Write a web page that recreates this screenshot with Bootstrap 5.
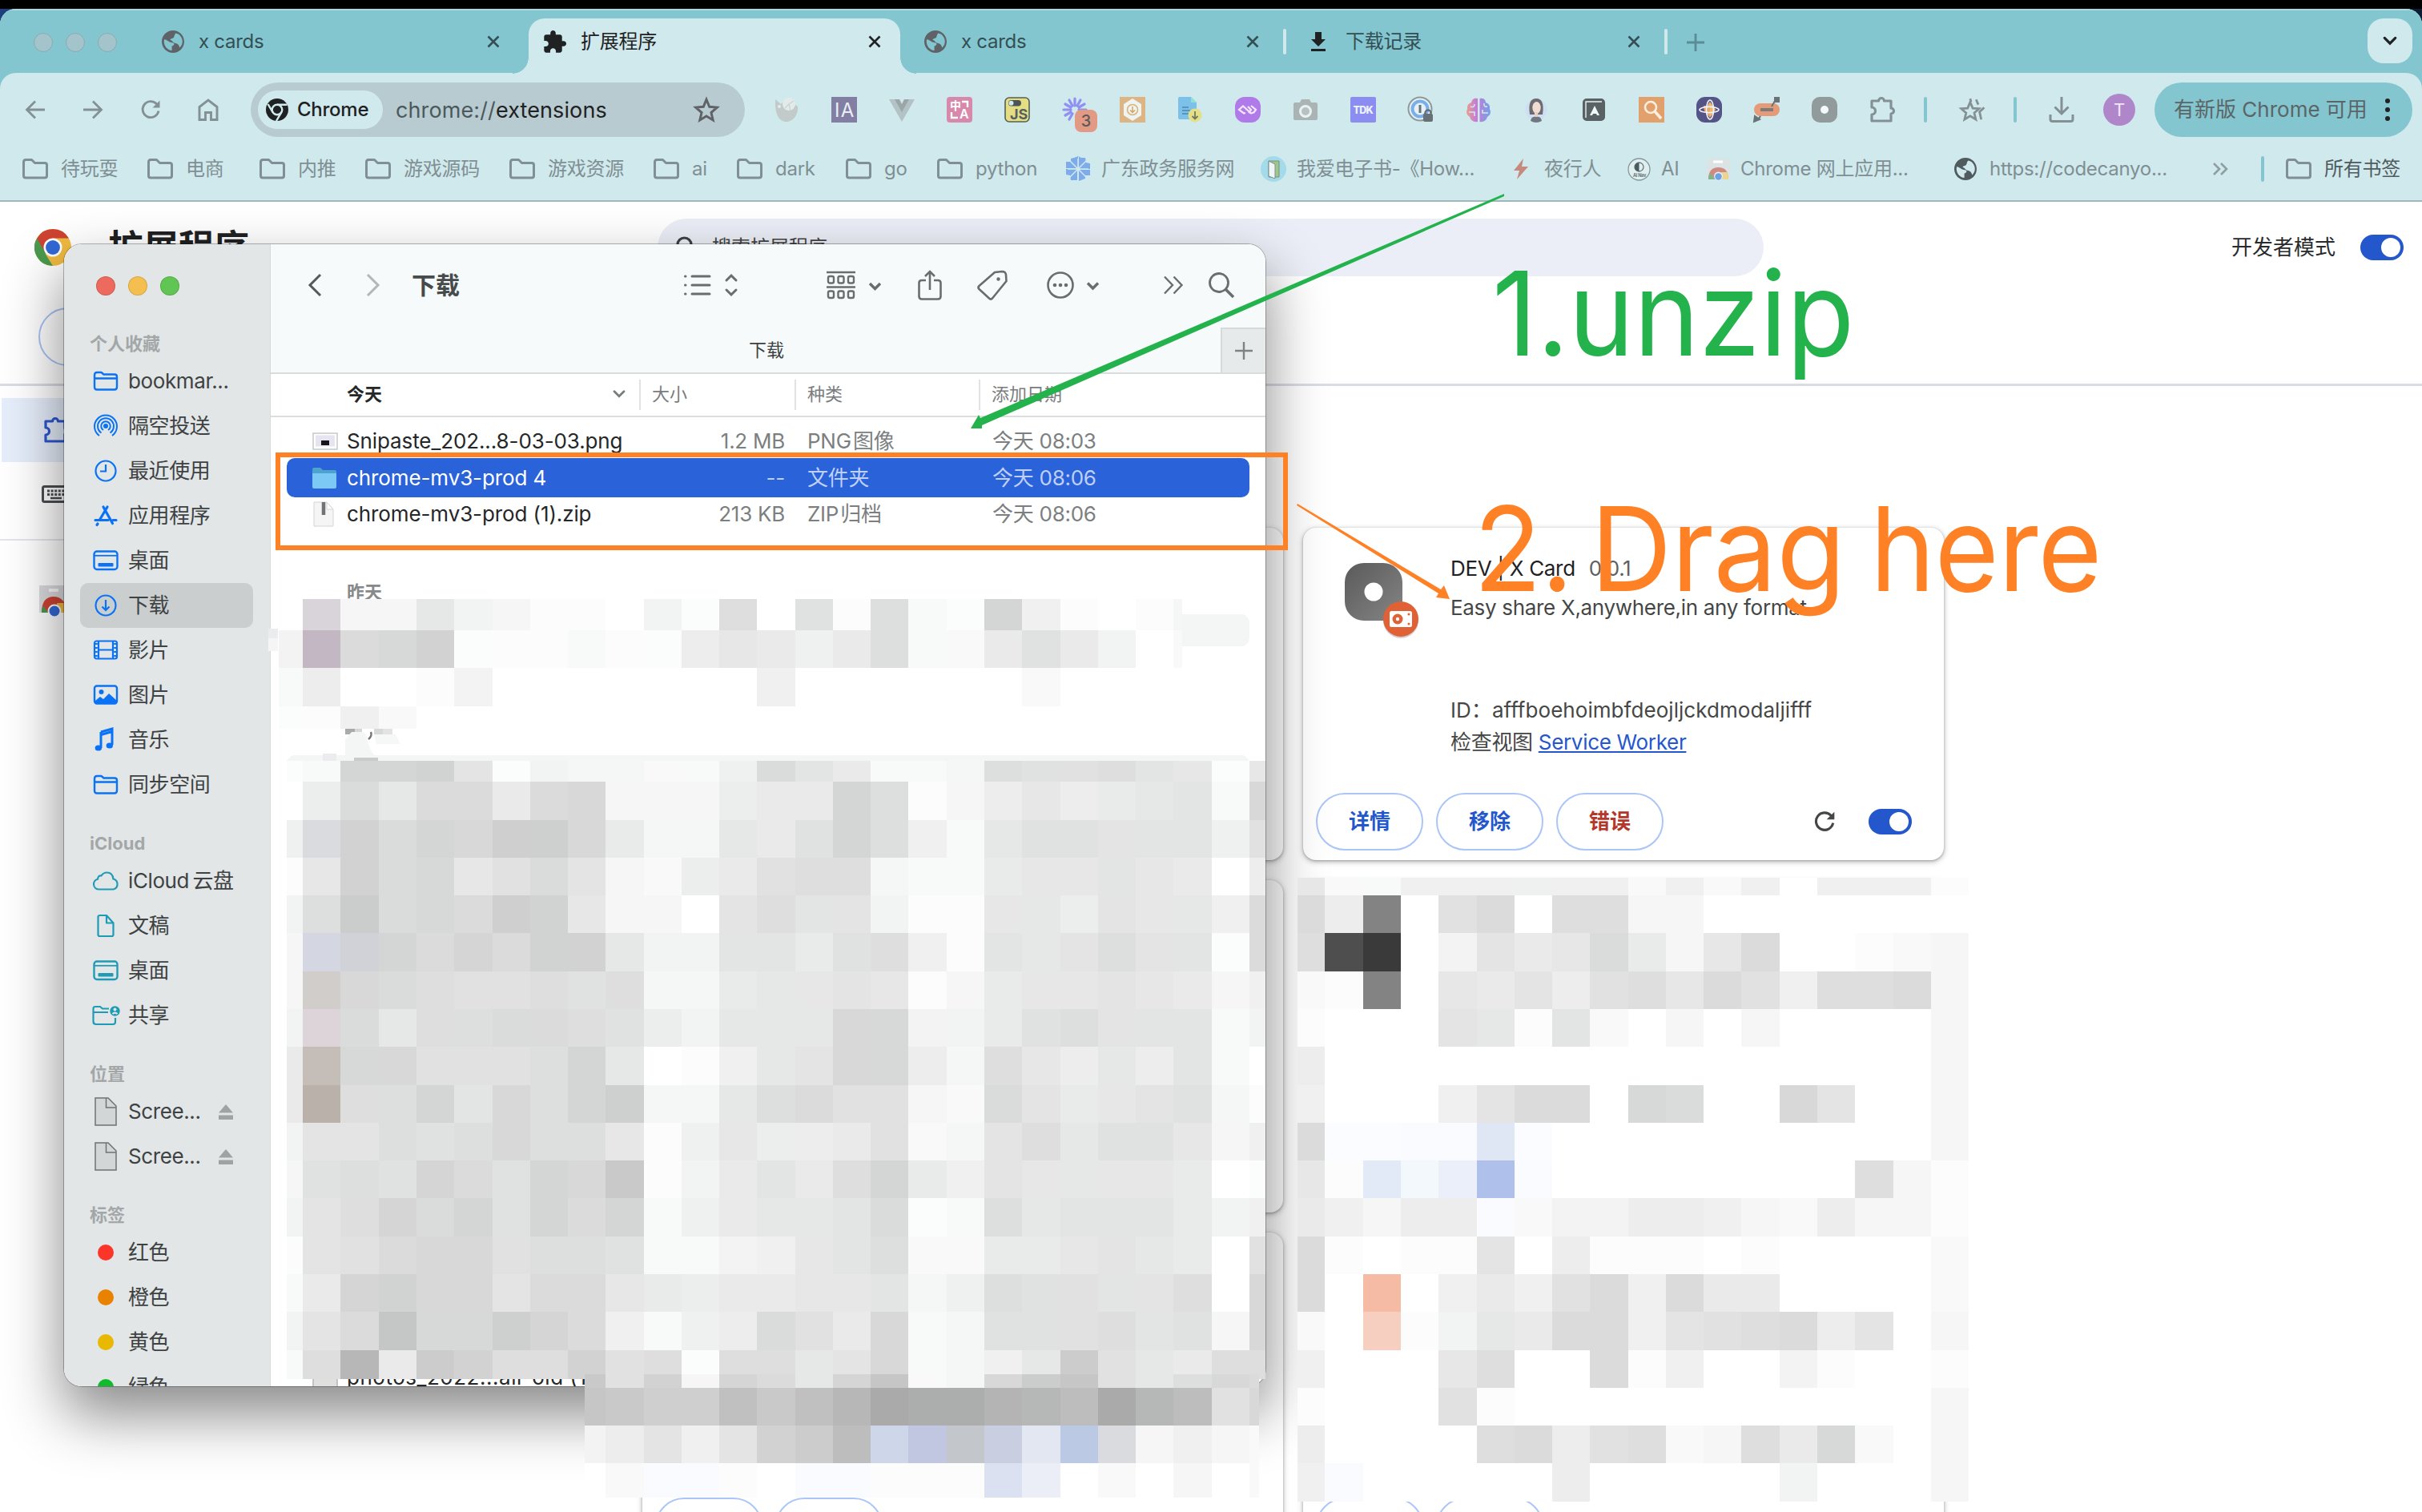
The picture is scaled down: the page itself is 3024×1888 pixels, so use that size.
<!DOCTYPE html>
<html lang="zh-CN">
<head>
<meta charset="utf-8">
<title>扩展程序</title>
<link href="https://cdn.jsdelivr.net/npm/bootstrap@5.3.0/dist/css/bootstrap.min.css" rel="stylesheet">
<script src="https://cdn.jsdelivr.net/npm/bootstrap@5.3.0/dist/js/bootstrap.bundle.min.js"></script>
<style>
html,body{width:3024px;height:1888px;overflow:hidden}
body{background:#000;font-family:Inter,"Noto Sans CJK SC",sans-serif;font-size:26px;line-height:1;color:#1f2123;padding-top:11px;letter-spacing:-.01em}
svg{display:block;flex:none;overflow:visible}
.defs{position:absolute}
.desk{background:linear-gradient(90deg,#1d3f7c,#0b1c33);height:1877px}
.browser{height:1877px;background:#fff;border-radius:20px 20px 0 0;overflow:hidden}
.tabstrip{height:80px;background:#83c6cf;border-top:2px solid #a5dbe2;display:grid;grid-template-columns:188px 472px 464px 482px 476px 874px 68px;font-size:24px;color:#344f54}
.lights{padding-left:42px}
.lights i{width:24px;height:24px;border-radius:50%;background:#a3c4ca;border:1px solid #8aabb0}
.tabx{padding:0 36px 2px 14px}
.tabx .nm{margin-left:18px}
.tab-on{background:#d0e9ec;border-radius:20px 20px 0 0;margin-top:10px;height:69px;padding:0 24px 11px 14px;color:#1f2123;position:relative}
.tab-on:before,.tab-on:after{content:"";position:absolute;bottom:0;width:20px;height:20px}
.tab-on:before{left:-20px;background:radial-gradient(circle at 0 0,#83c6cf 19.5px,#d0e9ec 20px)}
.tab-on:after{right:-20px;background:radial-gradient(circle at 100% 0,#83c6cf 19.5px,#d0e9ec 20px)}
.tab-3{padding:0 0 2px 30px}
.grey{color:#5f6368}
.cx{margin-right:30px}
.vsep{width:4px;height:32px;border-radius:2px;background:#d0e9ec}
.tabmenu{width:56px;height:56px;border-radius:20px;background:#d0e9ec;margin-top:10px;color:#1f2123}
.chrome-ui{background:#83c6cf}
.chrome-bars{background:#d0e9ec;border-radius:20px 20px 0 0;height:161px;border-bottom:2px solid #a2b7ba}
.toolbar{height:92px;display:grid;grid-template-columns:8px 72px 72px 72px 72px 17px 617px 16px repeat(20,72px) 36px 80px 28px 88px 56px 16px 322px;color:#839194}
.toolbar>*{align-self:center;justify-self:center}
.omni{width:617px;height:68px;border-radius:34px;background:#b8cbd0;padding-left:9px;padding-right:31px}
.chip{height:48px;border-radius:24px;background:#d0e9ec;padding:0 18px 0 10px;font-size:24px;font-weight:500;color:#1f2123;gap:11px;width:156px}
.url{margin-left:16px;color:#4c595c;font-size:27px;letter-spacing:.004em}
.url b{font-weight:400;color:#1f2123}
.vs2{width:4px;height:32px;border-radius:2px;background:#83c6cf}
.ava{width:40px;height:40px;border-radius:50%;background:#b086ca;color:#f1e6f6;font-size:22px}
.update{width:322px;height:68px;border-radius:34px;background:#83c6cf;color:#5b6568;font-size:26px;padding:0 28px 0 24px;letter-spacing:0;white-space:nowrap}
.marks{height:56px;display:grid;grid-template-columns:156px 140px 132px 180px 180px 104px 136px 114px 160px 244px 304px 154px 99px 309px 322px 61px 31px 160px;padding-left:28px;font-size:24px;color:#7f8f93;align-items:center}
.mk{gap:16px;white-space:nowrap}
.mk.tight{gap:13px}
.allmk{color:#4f5b5e}
.page{position:relative;height:1636px}
.phead{height:230px;border-bottom:3px solid #dadce4;padding:21px 23px 0 43px;display:grid;grid-template-columns:778px 1381px 1fr;position:relative}
.ptitle{font-size:44px;font-weight:700;letter-spacing:0;height:72px;gap:46px}
.psearch{height:72px;border-radius:36px;background:#ebeef6;font-size:24px;color:#444;padding-left:23px;gap:19px;letter-spacing:0}
.pdev{height:72px;color:#2a2b2d;letter-spacing:0;gap:31px}
.switch{width:54px;height:32px;border-radius:16px;background:#2457cb;padding:4px}
.switch i{width:24px;height:24px;border-radius:50%;background:#fff}
.pload{width:300px;height:73px;border:2px solid #a9c3f5;border-radius:37px;margin:39px 0 0 5px}
.pbody{display:grid;grid-template-columns:802px 1fr}
.pnav{width:600px}
.pnav .on{background:#e6eefb;margin:15px 0 0 2px;height:80px;padding-left:51px;color:#2b58cf}
.pnav .kb{height:80px;padding-left:52px;color:#4b4e51}
.pnav .ws{border-top:2px solid #e4e5ea;margin-top:16px;padding:56px 0 0 49px}
.cards{display:grid;grid-template-columns:800px 800px;grid-auto-rows:415px;gap:25px 25px;padding-top:177px}
.xc{background:#fff;border-radius:16px;box-shadow:0 2px 6px 1px rgba(60,64,67,.28),0 1px 3px rgba(60,64,67,.35);padding:16px 16px 12px;display:flex;flex-direction:column}
.xinfo{flex:1;padding:28px 0 0 36px;gap:60px;color:#454746}
.xicon{width:72px;height:72px}
.xt{width:600px;white-space:nowrap;letter-spacing:-.012em}
.xt div{height:26px}
.xname{margin-top:-6px;color:#1f2123}
.xver{margin-left:10px;color:#5d6062}
.xdesc{margin-top:23px}
.idl{margin-top:102px;letter-spacing:.002em}
.svl{margin-top:14px}
.swk{color:#2457cb}
.pb{width:134px;height:72px;border:2px solid #aac5f6;border-radius:36px;color:#2457cb;font-weight:700;letter-spacing:0;background:transparent;font-size:26px;padding:0;line-height:1}
.pb.red{color:#b3372b}
/* Finder window */
.finder{position:absolute;left:80px;top:305px;width:1500px;height:1426px;border-radius:22px;overflow:hidden;background:#fff;display:grid;grid-template-columns:258px 1fr;color:#252728}
.fshadow{position:absolute;left:80px;top:305px;width:1500px;height:1426px;border-radius:22px;box-shadow:0 0 0 1px rgba(0,0,0,.28),0 34px 72px 2px rgba(0,0,0,.46)}
.fside{background:#e2e6e7;border-right:1px solid #d5d9da;height:1426px;overflow:hidden;color:#3e4243}
.flights{padding:40px 0 41px 40px;gap:16px}
.flights i{width:24px;height:24px;border-radius:50%;box-shadow:inset 0 0 0 1px rgba(0,0,0,.13)}
.l-red{background:#ed6a5e}.l-yel{background:#f5bf4f}.l-grn{background:#61c554}
.t-red{background:#fc352b}.t-org{background:#e88200}.t-yel{background:#e9b800}.t-grn{background:#10bb2c}
.fh{height:38px;padding-left:32px;font-size:22px;font-weight:700;color:#a3a7a8;letter-spacing:0}
.fh.nx{margin-top:26px}
.fi{height:56px;margin:0 21px 0 20px;border-radius:10px;padding-left:14px;gap:10px;white-space:nowrap;letter-spacing:-.015em}
.fi svg{color:#0a73f5}
.fi.cl svg{color:#1f9bb6}
.fi.sel{background:#cacecf}
.dot{width:20px;height:20px;border-radius:50%;margin:0 8px}
.ftop{background:#f6fafa;height:162px;border-bottom:2px solid #d9dcdc;display:grid;grid-template-rows:104px 56px}
.fbar{color:#686d6e;padding:0 36px 2px 46px;display:grid;grid-template-columns:71px 59px 340px 178px 114px 74px 87px 145px 57px 34px;align-items:center}
.fbar b{font-size:30px;color:#474b4c;letter-spacing:0}
.ftabs{display:grid;grid-template-columns:1186px 56px;font-size:22px;color:#3e4243;letter-spacing:0}
.tname{padding-left:52px}
.fplus{background:#e6eaeb;border:2px solid #d5d9d9;border-width:2px 0 0 2px;color:#7d8283}
.fcols{height:54px;border-bottom:2px solid #dcdddd;display:grid;grid-template-columns:462px 194px 230px 1fr;align-items:center;font-size:22px;color:#7a7d7e;letter-spacing:0}
.fcols>div{height:38px;border-right:2px solid #e1e2e2;padding-left:14px;padding-bottom:3px}
.fcols>.c1{padding-left:95px;color:#252728}
.c1 svg{color:#7a7d7e;margin-right:17px}
.fcols>div:last-child{border:0}
.flist{padding-top:9px}
.fr{margin:0 20px;height:42px;border-radius:10px;display:grid;grid-template-columns:75px 387px 160px 28px 231px 1fr;align-items:center;white-space:nowrap;color:#7c7f80}
.fr>:first-child{margin-left:32px}
.fr .nm{color:#252728;letter-spacing:-.004em}
.fr.sel{background:#2a62da;height:49px;color:#bfd0f6}
.fr.sel .nm{color:#fff}
.fday{margin:65px 0 0 95px;font-size:22px;font-weight:700;color:#87898a;height:22px;letter-spacing:0}
.fr.last{margin-top:949px}
.fr.last .nm{letter-spacing:.02em}
.over{position:absolute;left:0;top:0;width:3024px;height:1888px;pointer-events:none}
</style>
</head>
<body>
<svg width="0" height="0" class="defs">
<defs>
<symbol id="globe" viewBox="2 2 20 20"><path fill="currentColor" d="M12 2C6.480 2 2 6.480 2 12s4.480 10 10 10 10-4.480 10-10S17.520 2 12 2zm-1 17.930c-3.950-.49-7-3.850-7-7.930 0-.62.08-1.210.21-1.790C6 9.500 8 13 12 13c1.500.500 1.500 2-1 3v3.930zm6.900-2.540c-.5-2.500-1.500-3.400-3.400-3.890-3-.5-2.500-2.500-5-3 .5-1.500 2-1 3-2 1-1 .5-3 2-4 3.500.500 5.900 4.060 5.900 7.410 0 2.080-.8 3.970-2.500 5.480z"/></symbol>
<symbol id="close" viewBox="0 0 16 16"><path d="M1.500 1.500l13 13M14.500 1.500l-13 13" stroke="currentColor" stroke-width="2.600" fill="none"/></symbol>
<symbol id="puz" viewBox="1 1 22 22"><path fill="currentColor" d="M20.500 11H19V7c0-1.100-.9-2-2-2h-4V3.500C13 2.120 11.880 1 10.500 1S8 2.120 8 3.500V5H4c-1.100 0-1.990.9-1.990 2v3.800H3.500c1.490 0 2.700 1.210 2.700 2.700s-1.210 2.700-2.700 2.700H2V20c0 1.100.9 2 2 2h3.800v-1.500c0-1.490 1.210-2.700 2.700-2.700 1.490 0 2.700 1.210 2.700 2.700V22H17c1.100 0 2-.9 2-2v-4h1.500c1.380 0 2.500-1.120 2.500-2.500S21.880 11 20.500 11z"/></symbol>
<symbol id="puzo" viewBox="0 0 34 34"><path fill="none" stroke="currentColor" stroke-width="3.200" stroke-linejoin="round" d="M4 6h8.500a3.500 3.500 0 0 1 7 0H28v9a3.500 3.500 0 0 1 0 7v9H4v-8a4.500 4.500 0 0 0 0-9z"/></symbol>
<symbol id="fold" viewBox="0 0 32 26"><path fill="none" stroke="currentColor" stroke-width="3" stroke-linejoin="round" d="M1.500 4.500Q1.500 1.500 4 1.500h7.500l4 4H28q2.500 0 2.500 2.500v13.500q0 2.500-2.500 2.500H4q-2.500 0-2.500-2.500z"/></symbol>
<symbol id="ffold" viewBox="0 0 32 26"><path fill="none" stroke="currentColor" stroke-width="2.400" stroke-linejoin="round" d="M2 5.500Q2 2 5 2h5.500l3 2.500H27q3 0 3 3V20q0 3.500-3 3.500H5Q2 23.500 2 20zM2 9.500h28"/></symbol>
<symbol id="desk" viewBox="0 0 32 26"><rect x="1.500" y="1.500" width="29" height="22.500" rx="3.500" fill="none" stroke="currentColor" stroke-width="2.400"/><path d="M2 6.800h28" stroke="currentColor" stroke-width="1.800"/><rect x="6.500" y="16" width="19" height="4.500" rx="1" fill="currentColor"/></symbol>
<symbol id="star" viewBox="0 0 32 32"><path fill="none" stroke="currentColor" stroke-width="2.800" d="M16 4l3.500 8.500 9 .8-6.900 6 2.100 8.900L16 23.500l-7.700 4.700 2.100-8.900-6.900-6 9-.8z"/></symbol>
<symbol id="chev" viewBox="0 0 16 10"><path d="M2 1.800l6 6 6-6" fill="none" stroke="currentColor" stroke-width="2.800" stroke-linecap="round"/></symbol>
<symbol id="reload" viewBox="0 0 28 28"><path d="M24 15.500A10 10 0 1 1 21.500 6.800L24 9" fill="none" stroke="currentColor" stroke-width="2.900"/><path d="M25.500 2.500v9h-9z" fill="currentColor"/></symbol>
<symbol id="clogo" viewBox="0 0 48 48"><circle cx="24" cy="24" r="24" fill="#f2bb41"/><path d="M3.200 12L24 24l-10 8 10 16A24 24 0 0 1 3.200 12z" fill="#4a9a4e"/><path d="M3.200 12A24 24 0 0 1 24 0a24 24 0 0 1 20.800 12H24L13 29z" fill="#cf4332"/><circle cx="24" cy="24" r="12" fill="#fff"/><circle cx="24" cy="24" r="9.300" fill="#3369d6"/></symbol>
<symbol id="doc" viewBox="0 0 28 36"><path d="M1 1h16l10 10v24H1z" fill="#d2d6d6" stroke="#6f7374" stroke-width="1.500"/><path d="M14.500 1v12H27" fill="none" stroke="#6f7374" stroke-width="1.500"/></symbol>
<symbol id="eject" viewBox="0 0 20 20"><path d="M10 1l9 10.500H1zM1 14.500h18V20H1z" fill="#9fa3a4"/></symbol>
</defs>
</svg>

<div class="desk"><div class="browser">
<div class="chrome-ui">
  <div class="tabstrip">
    <div class="lights d-flex align-items-center gap-3"><i></i><i></i><i></i></div>
    <div class="tabx d-flex align-items-center"><svg width="28" height="28" class="grey"><use href="#globe"/></svg><span class="nm">x cards</span><svg class="ms-auto" width="16" height="16"><use href="#close"/></svg></div>
    <div class="tabx tab-on d-flex align-items-center"><svg width="29" height="29" class="ms-1"><use href="#puz"/></svg><span class="nm">扩展程序</span><svg class="ms-auto" width="16" height="16"><use href="#close"/></svg></div>
    <div class="tabx tab-3 d-flex align-items-center"><svg width="28" height="28" class="grey"><use href="#globe"/></svg><span class="nm">x cards</span><svg class="ms-auto cx" width="16" height="16"><use href="#close"/></svg><div class="vsep"></div></div>
    <div class="tabx tab-3 d-flex align-items-center"><svg width="20" height="26" viewBox="0 0 20 26"><path d="M6 1h8v9h5l-9 9-9-9h5zM1 22h18v3H1z" fill="#1f2123"/></svg><span class="nm ms-4">下载记录</span><svg class="ms-auto cx" width="16" height="16"><use href="#close"/></svg><div class="vsep"></div></div>
    <div class="d-flex align-items-center ps-4"><svg width="22" height="22" viewBox="0 0 22 22"><path d="M11 0v22M0 11h22" stroke="#5a8c94" stroke-width="2.800"/></svg></div>
    <div class="tabmenu d-flex align-items-center justify-content-center"><svg width="18" height="12"><use href="#chev"/></svg></div>
  </div>
  <div class="chrome-bars">
    <div class="toolbar">
      <span></span>
      <svg width="26" height="24" viewBox="0 0 26 24"><path d="M25 12H3M13 1.500L2.500 12 13 22.500" fill="none" stroke="currentColor" stroke-width="2.800"/></svg>
      <svg width="26" height="24" viewBox="0 0 26 24"><path d="M1 12h22M13 1.500L23.500 12 13 22.500" fill="none" stroke="currentColor" stroke-width="2.800"/></svg>
      <svg width="28" height="28"><use href="#reload"/></svg>
      <svg width="26" height="28" viewBox="0 0 26 28"><path d="M2 26.500V10.500L13 2l11 8.500v16h-7.500v-9h-7v9z" fill="none" stroke="currentColor" stroke-width="2.900"/></svg>
      <span></span>
      <div class="omni d-flex align-items-center">
        <div class="chip d-flex align-items-center"><svg width="28" height="28" viewBox="0 0 28 28"><circle cx="14" cy="14" r="14" fill="#1f2123"/><circle cx="14" cy="14" r="6.300" fill="none" stroke="#d0e9ec" stroke-width="2.400"/><path d="M14 7.700h12.500M8.600 17.200L2.500 7M19.400 17.200L13 28" stroke="#d0e9ec" stroke-width="2.400"/></svg><span>Chrome</span></div>
        <div class="url">chrome://<b>extensions</b></div>
        <svg class="ms-auto grey" width="34" height="34"><use href="#star"/></svg>
      </div>
      <span></span>
      <svg width="32" height="32" viewBox="0 0 32 32"><path d="M2 3l7 6 7-7 14 10c1 9-5 19-14 19S1 22 2 3z" fill="#c3caca"/><circle cx="19" cy="9" r="8" fill="#e4eaea"/><path d="M19 9l-5 5M19 9l6-4M19 9l2 8" stroke="#c9d1d1" stroke-width="1.200"/><circle cx="7" cy="12" r="2" fill="#e4eaea"/></svg>
      <svg width="32" height="32" viewBox="0 0 32 32"><rect width="32" height="32" fill="#837ea4"/><text x="4" y="25" font-size="24" fill="#e8f0f6" textLength="24">IA</text></svg>
      <svg width="32" height="30" viewBox="0 0 32 30"><path d="M0 2h8l8 14 8-14h8L16 30z" fill="#b3c2c4"/><path d="M7 2h6l3 6 3-6h6l-9 16z" fill="#9aa6a8"/></svg>
      <svg width="32" height="32" viewBox="0 0 32 32"><rect width="32" height="32" rx="4" fill="#d889ab"/><text x="4" y="16" font-size="14" font-weight="700" fill="#fff">中</text><text x="16" y="27" font-size="16" font-weight="600" fill="#fff">A</text><path d="M19 6h7v7M6 19v7h8" stroke="#fff" stroke-width="2.400" fill="none"/></svg>
      <svg width="32" height="32" viewBox="0 0 32 32"><rect x="1" y="1" width="30" height="30" rx="5" fill="#e3de83" stroke="#555f55" stroke-width="1.600"/><rect x="5" y="4" width="16" height="7.500" rx="3.700" fill="#4c5557"/><circle cx="8.500" cy="7.700" r="3" fill="#d0e9ec"/><text x="7" y="28" font-size="18" font-weight="700" fill="#566062" textLength="22">JS</text></svg>
      <svg width="32" height="32" viewBox="0 0 32 32"><g stroke="#8e90f2" stroke-width="3.200" stroke-linecap="round"><path d="M16 2v9M9 4l4 7M23 4l-4 7M4 9l7 4M28 9l-7 4M2 16h9M4 23l7-4M9 28l4-7M21 16h9"/></g><rect x="16" y="16" width="28" height="28" rx="8" fill="#e29a85"/><text x="30" y="37" font-size="20" font-weight="500" text-anchor="middle" fill="#5f5a58">3</text></svg>
      <svg width="32" height="32" viewBox="0 0 32 32"><rect width="32" height="32" fill="#ddb585"/><path d="M16 2l11 7v14l-11 7-11-7V9z" fill="#eef4f1"/><circle cx="16" cy="16" r="6.500" fill="none" stroke="#d9b37b" stroke-width="1.600"/><path d="M16 12v7M13 16.500l3 3 3-3" stroke="#d9a35f" fill="none" stroke-width="1.500"/></svg>
      <svg width="32" height="32" viewBox="0 0 32 32"><path d="M3 0h14l7 7v21H3Q1 28 1 26V2Q1 0 3 0z" fill="#7cc1ea"/><path d="M17 0l7 7h-7z" fill="#8fe3d5"/><path d="M6 13h8M6 17h10M6 21h8" stroke="#4c87b0" stroke-width="1.600"/><circle cx="22" cy="23" r="8.500" fill="#e5e086"/><path d="M22 18v9M18.500 24l3.500 3.500 3.500-3.500" stroke="#6e7a66" stroke-width="1.800" fill="none"/></svg>
      <svg width="32" height="32" viewBox="0 0 32 32"><rect width="32" height="32" rx="12" fill="#b07ae8"/><path d="M13 20l-2 .5L5 16l5-4.500 10 9 3-1M16 12l4 4-3 4M20 11l6 5-3 4" fill="none" stroke="#f2e8fb" stroke-width="2.200"/></svg>
      <svg width="30" height="26" viewBox="0 0 30 26"><path d="M2 4h6l2-4h10l2 4h6q2 0 2 2v18q0 2-2 2H2q-2 0-2-2V6q0-2 2-2z" fill="#aab4b5"/><circle cx="15" cy="15" r="6.500" fill="#b9c0c1" stroke="#e8f2f3" stroke-width="3"/></svg>
      <svg width="32" height="32" viewBox="0 0 32 32"><rect width="32" height="32" rx="2" fill="#8b8df0"/><text x="3.500" y="20.500" font-size="12.500" font-weight="800" fill="#eef2fc" textLength="25">TDK</text></svg>
      <svg width="34" height="34" viewBox="0 0 34 34"><circle cx="16" cy="16" r="14.500" fill="#e7f1f4" stroke="#8d999b" stroke-width="2"/><circle cx="16" cy="16" r="9.500" fill="none" stroke="#7ab0ea" stroke-width="4"/><path d="M16 11v10" stroke="#66757a" stroke-width="3"/><rect x="20" y="22" width="12" height="10" rx="2" fill="#677074"/><path d="M22.500 23v-2a3.500 3.500 0 0 1 7 0v2" stroke="#677074" stroke-width="2.400" fill="none"/></svg>
      <svg width="32" height="32" viewBox="0 0 32 32"><defs><linearGradient id="br"><stop offset="0" stop-color="#e8a08c"/><stop offset=".4" stop-color="#c77bd6"/><stop offset="1" stop-color="#73a2e6"/></linearGradient></defs><path d="M15 2q-7-1-8 5-6 2-5 8-3 6 3 10 2 7 10 6zM17.500 2q7-1 7.500 5 6 2 5 8 3 6-3 10-2 7-9.500 6z" fill="url(#br)"/><path d="M6 12q5 2 5-3M4 19h7v5M27 12q-5 1-4-4M28 20h-7v-4" stroke="#d0e9ec" stroke-width="1.600" fill="none"/></svg>
      <svg width="28" height="32" viewBox="0 0 28 32"><circle cx="14" cy="16" r="13.500" fill="#cfdff2"/><path d="M6 22Q3 2 14 2t8 20z" fill="#6d6a70"/><ellipse cx="14.500" cy="13.500" rx="5.200" ry="7.500" fill="#f0dcd3"/><path d="M12 19h4v6h-4z" fill="#eccfc4"/><path d="M7 30q1-6 7-5 6-1 7 5-7 4-14 0z" fill="#717780"/></svg>
      <svg width="28" height="28" viewBox="0 0 28 28"><rect x="1" y="1" width="26" height="26" rx="4" fill="#596265" stroke="#586164" stroke-width="2"/><path d="M4 24V4h20" fill="none" stroke="#e9f3f4" stroke-width="1.400"/><path d="M15 9l6 12h-3l-1-2h-4l-1 2H9z" fill="#f2f8f8"/></svg>
      <svg width="32" height="32" viewBox="0 0 32 32"><rect width="32" height="32" fill="#e2a06d"/><circle cx="15" cy="13" r="7" fill="none" stroke="#fdeee0" stroke-width="2.600"/><path d="M20 18l8 9" stroke="#fdeee0" stroke-width="3.600"/></svg>
      <svg width="32" height="32" viewBox="0 0 32 32"><rect width="32" height="32" rx="11" fill="#555487"/><path d="M17 6l7 10-7 10-7-10z" fill="#edbc6a"/><path d="M9 11l8 0v13q-8-3-8-13z" fill="#e8a56c"/><ellipse cx="16" cy="16" rx="12" ry="3.600" fill="none" stroke="#f2f2fa" stroke-width="1.600"/><ellipse cx="17" cy="16" rx="4.500" ry="12" fill="none" stroke="#f2f2fa" stroke-width="1.600"/></svg>
      <svg width="32" height="32" viewBox="0 0 32 32"><rect y="8" width="32" height="16" rx="8" fill="#e59a78"/><rect x="8" y="14" width="16" height="4" fill="#7d7b78"/><path d="M22 12l4-7M0 31l1-7 6 4zM5 28q2-2 3-4" stroke="#697375" stroke-width="2" fill="#697375"/><rect x="25" y="0" width="7" height="7" fill="#697375"/></svg>
      <svg width="32" height="32" viewBox="0 0 32 32"><rect width="32" height="32" rx="10" fill="#929b9c"/><circle cx="16" cy="16" r="5" fill="#f4fafa"/></svg>
      <svg width="34" height="34"><use href="#puzo"/></svg>
      <div class="vs2"></div>
      <svg width="34" height="34" viewBox="0 0 32 32"><path fill="none" stroke="currentColor" stroke-width="2.600" d="M14 7l3 7.200 7.500.6-5.700 5 1.800 7.500-6.600-4-6.600 4 1.800-7.500-5.700-5 7.500-.6zM14 3l1 4M21 4l2.500 6M30.500 13.500l-5.500 5 2 9"/></svg>
      <div class="vs2"></div>
      <svg width="32" height="32" viewBox="0 0 32 32"><path d="M16 0v20M7.500 12.500L16 21l8.500-8.500M2 22v6q0 2.500 2.500 2.500h23Q30 30.500 30 28v-6" fill="none" stroke="currentColor" stroke-width="3"/></svg>
      <div class="ava d-flex align-items-center justify-content-center">T</div>
      <span></span>
      <div class="update d-flex align-items-center justify-content-between"><span>有新版 Chrome 可用</span><svg width="6" height="28" viewBox="0 0 6 28" fill="#1f2123"><circle cx="3" cy="3" r="3"/><circle cx="3" cy="14" r="3"/><circle cx="3" cy="25" r="3"/></svg></div>
    </div>
    <div class="marks">
      <div class="mk d-flex align-items-center"><svg width="32" height="26"><use href="#fold"/></svg>待玩耍</div>
      <div class="mk d-flex align-items-center"><svg width="32" height="26"><use href="#fold"/></svg>电商</div>
      <div class="mk d-flex align-items-center"><svg width="32" height="26"><use href="#fold"/></svg>内推</div>
      <div class="mk d-flex align-items-center"><svg width="32" height="26"><use href="#fold"/></svg>游戏源码</div>
      <div class="mk d-flex align-items-center"><svg width="32" height="26"><use href="#fold"/></svg>游戏资源</div>
      <div class="mk d-flex align-items-center"><svg width="32" height="26"><use href="#fold"/></svg>ai</div>
      <div class="mk d-flex align-items-center"><svg width="32" height="26"><use href="#fold"/></svg>dark</div>
      <div class="mk d-flex align-items-center"><svg width="32" height="26"><use href="#fold"/></svg>go</div>
      <div class="mk d-flex align-items-center"><svg width="32" height="26"><use href="#fold"/></svg>python</div>
      <div class="mk tight d-flex align-items-center"><svg width="32" height="32" viewBox="0 0 32 32"><g fill="#7eaceb"><path d="M8 4L16 0v16zM16 0l8 4v8z"/><path d="M17 2h8l1 6 5 1v7H17z"/><path d="M15 30H7l-1-6-5-1v-7h14zM1 7h6V3l8-2v14H1zM31 24h-6v4l-8 3V17h14z"/></g><path d="M5 5l22 22M27 5L5 27M16 3v26M3 16h26" stroke="#d0e9ec" stroke-width="1.500"/></svg>广东政务服务网</div>
      <div class="mk tight d-flex align-items-center"><svg width="32" height="32" viewBox="0 0 32 32"><circle cx="16" cy="16" r="16" fill="#a4dbea"/><path d="M10 6h13v20H10z" fill="#a0c68e" stroke="#7a8f7c"/><path d="M10 6l8 4v18l-8-3z" fill="#eff6f5" stroke="#7a8f8c"/></svg>我爱电子书-《How...</div>
      <div class="mk d-flex align-items-center ps-2"><svg width="18" height="26" viewBox="0 0 18 26" class="ms-1 me-1"><path d="M12 0L0 15h7L4 26 18 10h-8z" fill="#c5897d"/></svg>夜行人</div>
      <div class="mk tight d-flex align-items-center"><svg width="29" height="29" viewBox="0 0 29 29"><circle cx="14.500" cy="14.500" r="13.500" fill="#dfeeef" stroke="#87979a" stroke-width="1.300"/><circle cx="14.500" cy="11.500" r="5.500" fill="none" stroke="#66767a" stroke-width="1.300"/><path d="M14.500 6a5.500 5.500 0 0 0 0 11z" fill="#4b5a5e"/><text x="7" y="24" font-size="5.500" font-weight="700" fill="#66767a">AI Nav</text></svg>AI</div>
      <div class="mk tight d-flex align-items-center"><svg width="29" height="26" viewBox="0 0 29 26"><path d="M0 0h29v26H0z" fill="#dbe3e4"/><path d="M8 4h12" stroke="#fff" stroke-width="3"/><path d="M2 26q0-15 12.500-15T27 26z" fill="#d08b80"/><path d="M2 26q0-5 2-8l7 8z" fill="#7fb58c"/><path d="M18 17h7q2 3 2 9h-8z" fill="#ead690"/><circle cx="14.500" cy="22" r="5.500" fill="#e4eef5"/><circle cx="14.500" cy="22.500" r="4.200" fill="#6f9fe4"/></svg>Chrome 网上应用...</div>
      <div class="mk d-flex align-items-center"><svg width="28" height="28" class="allmk"><use href="#globe"/></svg>https://codecanyo...</div>
      <svg width="20" height="16" viewBox="0 0 20 16"><path d="M2 1l7 7-7 7M11 1l7 7-7 7" fill="none" stroke="#8f9ea1" stroke-width="2.600"/></svg>
      <div><div class="vs2 ms-n2"></div></div>
      <div class="mk d-flex align-items-center"><svg width="32" height="26"><use href="#fold"/></svg><span class="allmk">所有书签</span></div>
    </div>
  </div>
</div>

<div class="page">
  <div class="phead">
    <div>
      <div class="ptitle d-flex align-items-center"><svg width="46" height="46"><use href="#clogo"/></svg>扩展程序</div>
      <div class="pload"></div>
    </div>
    <div class="psearch d-flex align-items-center"><svg width="26" height="28" viewBox="0 0 26 28"><circle cx="10.500" cy="10.500" r="8.500" fill="none" stroke="#3c4043" stroke-width="3.200"/><path d="M16 17l8 9" stroke="#3c4043" stroke-width="3.200"/></svg>搜索扩展程序</div>
    <div class="pdev d-flex align-items-center justify-content-end">开发者模式<div class="switch d-flex justify-content-end"><i></i></div></div>
  </div>
  <div class="pbody">
    <div class="pnav">
      <div class="on d-flex align-items-center"><svg width="34" height="34"><use href="#puzo"/></svg></div>
      <div class="kb d-flex align-items-center"><svg width="38" height="22" viewBox="0 0 38 22"><rect x="1.500" y="1.500" width="36" height="19" rx="2" fill="none" stroke="currentColor" stroke-width="3"/><path d="M7 7h24M7 11.500h24" stroke="currentColor" stroke-width="3" stroke-dasharray="3 1.600"/><path d="M11 16h14" stroke="currentColor" stroke-width="2.600"/></svg></div>
      <div class="ws"><svg width="34" height="34" viewBox="0 0 34 34"><path d="M0 0h34v34H0z" fill="#dcdce0"/><path d="M12 6h12" stroke="#fff" stroke-width="3.600"/><path d="M3 34q0-20 15-20t16 20z" fill="#cf4332"/><path d="M3 34q0-5 2-9l6 9z" fill="#4a9a4e"/><path d="M22 22h12v12H24z" fill="#f2bb41"/><circle cx="19" cy="32" r="8.500" fill="#fff"/><circle cx="19" cy="32" r="6.500" fill="#3369d6"/></svg></div>
    </div>
    <div class="cards">
      <div class="xc"></div>
      <div class="xc">
        <div class="xinfo d-flex">
          <div class="xicon"><svg width="92" height="92" viewBox="0 0 92 92"><defs><linearGradient id="xg" x2="1" y2="1"><stop offset="0" stop-color="#5a5a5a"/><stop offset="1" stop-color="#858585"/></linearGradient></defs><rect width="72" height="72" rx="24" fill="url(#xg)"/><circle cx="36" cy="36" r="11.500" fill="#fff"/><circle cx="70" cy="72" r="22" fill="#000" opacity=".18"/><circle cx="70" cy="70" r="22" fill="#e06135"/><rect x="56" y="60" width="28" height="20" rx="2.500" fill="#fff"/><circle cx="66" cy="70" r="6.500" fill="#e06135"/><circle cx="66" cy="70" r="2.200" fill="#fff"/><circle cx="80" cy="64" r="1.500" fill="#e06135"/><circle cx="80" cy="76" r="1.500" fill="#e06135"/></svg></div>
          <div class="xt">
            <div class="xname">DEV | X Card <span class="xver">0.0.1</span></div>
            <div class="xdesc">Easy share X,anywhere,in any format</div>
            <div class="idl">ID：afffboehoimbfdeojljckdmodaljifff</div>
            <div class="svl">检查视图 <a class="swk" href="#">Service Worker</a></div>
          </div>
        </div>
        <div class="d-flex align-items-center gap-3">
          <button class="pb">详情</button><button class="pb">移除</button><button class="pb red">错误</button>
          <svg class="ms-auto" width="30" height="30" color="#444746"><use href="#reload"/></svg>
          <div class="switch d-flex justify-content-end ms-4 me-4"><i></i></div>
        </div>
      </div>
      <div class="xc"></div><div class="xc"></div>
      <div class="xc justify-content-end"><div class="d-flex gap-3"><button class="pb"></button><button class="pb"></button></div></div>
      <div class="xc justify-content-end"><div class="d-flex gap-3"><button class="pb"></button><button class="pb"></button></div></div>
    </div>
  </div>
</div>
</div></div>

<div class="fshadow"></div>
<div class="finder">
  <div class="fside">
    <div class="flights d-flex"><i class="l-red"></i><i class="l-yel"></i><i class="l-grn"></i></div>
    <div class="fh d-flex align-items-center">个人收藏</div>
    <div class="fi d-flex align-items-center"><svg width="36" height="26"><use href="#ffold"/></svg>bookmar...</div>
    <div class="fi d-flex align-items-center"><svg width="36" height="30" viewBox="0 0 36 30" fill="none" stroke="currentColor" stroke-width="2"><circle cx="18" cy="15" r="2" fill="currentColor"/><path d="M15 20a5.800 5.800 0 1 1 6 0M12.500 23.500a10 10 0 1 1 11 0M10 27a14 14 0 1 1 16 0"/></svg>隔空投送</div>
    <div class="fi d-flex align-items-center"><svg width="36" height="28" viewBox="0 0 36 28" fill="none" stroke="currentColor" stroke-width="2.200"><circle cx="18" cy="14" r="12.500"/><path d="M18 6v8.500h-7"/></svg>最近使用</div>
    <div class="fi d-flex align-items-center"><svg width="36" height="28" viewBox="0 0 36 28" fill="none" stroke="currentColor" stroke-width="3.200" stroke-linecap="round"><path d="M15 3l11.500 20.500M20 3L10.500 19M5 19.500h16M27 19.500h4M8 24l-1 1.500"/></svg>应用程序</div>
    <div class="fi d-flex align-items-center"><svg width="36" height="26"><use href="#desk"/></svg>桌面</div>
    <div class="fi sel d-flex align-items-center"><svg width="36" height="28" viewBox="0 0 36 28" fill="none" stroke="currentColor" stroke-width="2.200"><circle cx="18" cy="14" r="12.500"/><path d="M18 7v13M13.500 15.500L18 20l4.500-4.500"/></svg>下载</div>
    <div class="fi d-flex align-items-center"><svg width="36" height="26" viewBox="0 0 36 26" fill="none" stroke="currentColor" stroke-width="2.200"><rect x="4" y="1.500" width="28" height="22" rx="2.500"/><path d="M9 2v21M27 2v21M9 12.500h18"/><path d="M6.300 4v19M29.700 4v19" stroke-width="3" stroke-dasharray="2 3"/></svg>影片</div>
    <div class="fi d-flex align-items-center"><svg width="36" height="26" viewBox="0 0 36 26"><rect x="4" y="1.500" width="28" height="22" rx="3" fill="none" stroke="currentColor" stroke-width="2.400"/><circle cx="12.500" cy="9" r="3" fill="currentColor"/><path d="M5 20l6-5 4 3 7-7 10 9v3H5z" fill="currentColor"/></svg>图片</div>
    <div class="fi d-flex align-items-center"><svg width="36" height="30" viewBox="0 0 36 30"><path d="M12 5l14-4v20M12 5v20M12 8.500l14-4" stroke="currentColor" stroke-width="3" fill="none"/><ellipse cx="8.800" cy="25" rx="4.200" ry="3.600" fill="currentColor"/><ellipse cx="22.800" cy="22" rx="4.200" ry="3.600" fill="currentColor"/></svg>音乐</div>
    <div class="fi d-flex align-items-center"><svg width="36" height="26"><use href="#ffold"/></svg>同步空间</div>
    <div class="fh nx d-flex align-items-center">iCloud</div>
    <div class="fi cl d-flex align-items-center"><svg width="36" height="24" viewBox="0 0 36 24"><path d="M9 22.500a6.500 6.500 0 0 1-1-12.800Q8.500 5 12.500 5.500 15 1.500 19.500 1.500q7 0 8 8a6.700 6.700 0 0 1 0 13z" fill="none" stroke="currentColor" stroke-width="2.200"/></svg><span>iCloud&#8201;云盘</span></div>
    <div class="fi cl d-flex align-items-center"><svg width="36" height="28" viewBox="0 0 36 28" fill="none" stroke="currentColor" stroke-width="2.200" stroke-linejoin="round"><path d="M8.500 3q0-2 2-2H19l8.500 9.500V25q0 2-2 2h-15q-2 0-2-2zM19 1.500v9h8"/></svg>文稿</div>
    <div class="fi cl d-flex align-items-center"><svg width="36" height="26"><use href="#desk"/></svg>桌面</div>
    <div class="fi cl d-flex align-items-center"><svg width="36" height="26" viewBox="0 0 36 26" fill="none" stroke="currentColor" stroke-width="2.200"><path d="M22 4.500h-8L11 2H5Q2.500 2 2.500 4.500v16Q2.500 24 6 24h21q3 0 3-3v-5M3 9h18"/><circle cx="29.500" cy="7.500" r="6.200" fill="currentColor" stroke="none"/><circle cx="29.500" cy="5.500" r="2" fill="#e2e6e7" stroke="none"/><path d="M26.500 11q3-3 6 0" stroke="#e2e6e7"/></svg>共享</div>
    <div class="fh nx d-flex align-items-center">位置</div>
    <div class="fi d-flex align-items-center"><svg width="36" height="36"><use href="#doc"/></svg>Scree...<svg class="ms-auto me-4" width="20" height="20"><use href="#eject"/></svg></div>
    <div class="fi d-flex align-items-center"><svg width="36" height="36"><use href="#doc"/></svg>Scree...<svg class="ms-auto me-4" width="20" height="20"><use href="#eject"/></svg></div>
    <div class="fh nx d-flex align-items-center">标签</div>
    <div class="fi d-flex align-items-center"><i class="dot t-red"></i>红色</div>
    <div class="fi d-flex align-items-center"><i class="dot t-org"></i>橙色</div>
    <div class="fi d-flex align-items-center"><i class="dot t-yel"></i>黄色</div>
    <div class="fi d-flex align-items-center"><i class="dot t-grn"></i>绿色</div>
  </div>
  <div class="fmain">
    <div class="ftop">
      <div class="fbar">
        <svg width="18" height="28" viewBox="0 0 18 28"><path d="M16 1L3 14l13 13" fill="none" stroke="#56595a" stroke-width="3"/></svg>
        <svg width="18" height="28" viewBox="0 0 18 28"><path d="M4 1l13 13L4 27" fill="none" stroke="#b3b7b8" stroke-width="3"/></svg>
        <b>下载</b>
        <svg width="68" height="28" viewBox="0 0 68 28" fill="none" stroke="currentColor" stroke-width="3" stroke-linecap="round"><path d="M10 3h22M10 14h22M10 25h22M1.500 3h.5M1.500 14h.5M1.500 25h.5M53 8l6-6 6 6M53 20l6 6 6-6"/></svg>
        <svg width="70" height="36" viewBox="0 0 70 36" fill="none" stroke="currentColor" stroke-width="2.400"><path d="M0 2h36M0 20.500h36"/><rect x="2" y="7" width="7" height="8.500" rx="2"/><rect x="14.500" y="7" width="7" height="8.500" rx="2"/><rect x="27" y="7" width="7" height="8.500" rx="2"/><rect x="2" y="25.500" width="7" height="8.500" rx="2"/><rect x="14.500" y="25.500" width="7" height="8.500" rx="2"/><rect x="27" y="25.500" width="7" height="8.500" rx="2"/><path d="M54 16l6.500 6.500L67 16" stroke-width="3.400"/></svg>
        <svg width="30" height="38" viewBox="0 0 30 38" fill="none" stroke="currentColor" stroke-width="2.600"><path d="M10 13H5q-3.500 0-3.500 3v17q0 3.500 3.500 3.500h20q3.500 0 3.500-3.500V16q0-3-3.500-3h-5M15 25V2M9 8l6-6 6 6"/></svg>
        <svg width="38" height="38" viewBox="0 0 38 38" fill="none" stroke="currentColor" stroke-width="2.600" stroke-linejoin="round"><path d="M22 3l9-1q4.500 0 5 4l.5 8L19 35.500q-2 2-4 0L2.500 24q-2-2 0-4z"/><circle cx="26.500" cy="11.500" r="2.200" fill="currentColor" stroke="none"/></svg>
        <svg width="66" height="34" viewBox="0 0 66 34" fill="none" stroke="currentColor" stroke-width="2.600"><circle cx="17" cy="17" r="15.500"/><g fill="currentColor" stroke="none"><circle cx="10" cy="17" r="2.300"/><circle cx="17" cy="17" r="2.300"/><circle cx="24" cy="17" r="2.300"/></g><path d="M51 14.500l6.500 6.500 6.500-6.500" stroke-width="3.400"/></svg>
        <svg width="26" height="24" viewBox="0 0 26 24"><path d="M2 1.500L12 12 2 22.500M13.500 1.500l10 10.500-10 10.500" fill="none" stroke="currentColor" stroke-width="2.400"/></svg>
        <svg width="32" height="32" viewBox="0 0 32 32"><circle cx="13" cy="13" r="11.500" fill="none" stroke="currentColor" stroke-width="2.800"/><path d="M21 21l10 10" stroke="currentColor" stroke-width="3.600"/></svg>
      </div>
      <div class="ftabs"><div class="tname d-flex align-items-center justify-content-center">下载</div><div class="fplus d-flex align-items-center justify-content-center"><svg width="22" height="22" viewBox="0 0 22 22"><path d="M11 0v22M0 11h22" stroke="currentColor" stroke-width="2.400"/></svg></div></div>
    </div>
    <div class="fcols">
      <div class="c1 d-flex align-items-center justify-content-between"><b>今天</b><svg width="16" height="10"><use href="#chev"/></svg></div>
      <div class="d-flex align-items-center">大小</div><div class="d-flex align-items-center">种类</div><div class="d-flex align-items-center">添加日期</div>
    </div>
    <div class="flist">
      <div class="fr"><svg width="32" height="22" viewBox="0 0 32 22"><rect x="1" y="1" width="30" height="20" fill="#fff" stroke="#c8c8c8" stroke-width="1.500"/><rect x="4" y="3.500" width="24" height="14" fill="#e6e4f0"/><rect x="11" y="10" width="10" height="6" fill="#17171b"/></svg><span class="nm">Snipaste_202...8-03-03.png</span><span class="text-end">1.2 MB</span><span></span><span>PNG&#8202;图像</span><span>今天 08:03</span></div>
      <div class="fr sel"><svg width="30" height="28" viewBox="0 0 30 28"><path d="M0 3q0-2 2-2h8l3 3h15q2 0 2 2v18H0z" fill="#4ba3cf"/><path d="M0 8h30v17q0 2-2 2H2q-2 0-2-2z" fill="#7cc9f5"/></svg><span class="nm">chrome-mv3-prod 4</span><span class="text-end">--</span><span></span><span>文件夹</span><span>今天 08:06</span></div>
      <div class="fr"><svg width="28" height="32" viewBox="0 0 28 32"><path d="M2 1h16l8 9v21H2z" fill="#f5f5f5" stroke="#d4d4d4"/><path d="M18 1v9h8z" fill="#fff" stroke="#d4d4d4"/><path d="M14 1v16" stroke="#6f7577" stroke-width="4.500"/></svg><span class="nm">chrome-mv3-prod (1).zip</span><span class="text-end">213 KB</span><span></span><span>ZIP&#8202;归档</span><span>今天 08:06</span></div>
      <div class="fday">昨天</div>
      <div class="fr last"><svg width="32" height="26" viewBox="0 0 32 26"><rect x="1" y="1" width="30" height="24" fill="#dfe0de" stroke="#b5b5b5" stroke-width="1.500"/></svg><span class="nm">photos_2022...all-old (1).zip</span></div>
    </div>
  </div>
</div>

<svg class="over" id="mosaic" viewBox="0 0 3024 1888" shape-rendering="crispEdges"></svg>

<svg class="over" viewBox="0 0 3024 1888">
  <rect x="347" y="568" width="1258" height="116" fill="none" stroke="#ff8126" stroke-width="6"/>
  <path d="M1878 242L1224 522l-2-4-10 17h14v-4L1878 245z" fill="#24b24c"/>
  <path d="M1620 629L1799 736l4-5 7 17-17-2 3-5L1619 631z" fill="#ff8126"/>
  <text x="1863" y="444" font-size="146" fill="#24b24c" textLength="452" lengthAdjust="spacingAndGlyphs">1.unzip</text>
  <text y="738" font-size="146" fill="#ff8126"><tspan x="1840" textLength="124" lengthAdjust="spacingAndGlyphs">2.</tspan> <tspan x="1986" textLength="318" lengthAdjust="spacingAndGlyphs">Drag</tspan> <tspan x="2335" textLength="289" lengthAdjust="spacingAndGlyphs">here</tspan></text>
</svg>

<script>
// Pixelated regions: each character is one block on a shared grid of 47.27px columns.
// a..z are neutral greys from white downwards, A..Z the same with a cool tint.
const extra={1:'#d9d3da',2:'#c2b7c2',3:'#dadbdf',4:'#d4d7e1',5:'#d1d2d7',6:'#d1cdca',7:'#ddd4da',8:'#c5bdb8',9:'#bbb1ab','$':'#aaaaaa','%':'#abaeac','(':'#ced6ea',')':'#c1c6e1','*':'#c3c7cb','+':'#cacee1',',':'#e2e7f2','-':'#bcc9e4','/':'#f9fbff',':':'#dbe1f0',';':'#ebeef7','<':'#838383','=':'#4e4e4e','>':'#3a3a3a','?':'#fbfcff','@':'#dfe6f4','[':'#e3eaf7',']':'#f3f8fc','{':'#eaeff9','}':'#afc0ea','^':'#f5bba5','~':'#f7cfc0'};
function tone(c){
  if(extra[c])return extra[c];
  if(c>='a'){const v=255-3*(c.charCodeAt(0)-97);return `rgb(${v},${v},${v})`}
  const v=255-3*(c.charCodeAt(0)-65);return `rgb(${v-1},${v+1},${v})`;
}
let out='';
const box=(x,y,w,h,f,r)=>{out+=`<rect x="${x}" y="${y}" width="${w}" height="${h}" fill="${f}"${r?` rx="${r}"`:''}/>`};
function block(col,xmin,xmax,ys,rows){
  rows.forEach((r,i)=>[...r].forEach((c,k)=>{
    const a=Math.max(xmin,Math.round(47.27*(col+k))),b=Math.min(xmax,Math.round(47.27*(col+k+1)));
    box(a,ys[i],b-a,ys[i+1]-ys[i],tone(c));
  }));
}
box(1460,767,100,40,'#f4f6f5',10);
block(7,348,1476,[748,787,834,882,910],["a1ddIEdbbaEBlaKbLCBOfbabD","e2mNpBbbCbBgihFhLCchKhEac","Cgaabeaaaaaaafaaaaaacaaaa","Bbfcaaaaaaaaaaaaaaaaaaaaa"]);
box(335,785,12,12,'#ebecee');box(335,797,12,16,'#f5f5f6');
box(358,943,1202,20,'#f4f6f5',10);
box(431,910,12,7,'#aaa');box(443,910,9,7,'#d6d6d6');box(467,910,11,7,'#d8d8d8');box(478,910,12,7,'#e3e3e3');
out+='<path d="M463 914q2 5-3 9" stroke="#777" stroke-width="2.500" fill="none" shape-rendering="auto"/><path d="M431 923l8-9h14q4 0 6 12 4 14 14 24h-42z" fill="#f4f6f5" shape-rendering="auto"/><path d="M467 917h27l6 12h-30z" fill="#f6f7f7" shape-rendering="auto"/>';
box(403,941,17,9,'#ececee');box(442,946,30,4,'#c9cbca');
block(7,358,1580,[950,976,1024,1071,1118,1165,1213,1260,1307,1355,1402,1449,1496,1544,1591,1638,1686,1722],[
"BCOOPjBEDDcCFMJhCCDLKklJiBi","aGMImmhmndddGhhOLbdgigHIJCn","F3pMOnqQnHDDIhKOLfCIKKjJJFk","bipMNikMjdcGhkllDCCHiiJihag","ELRMNmqPiddajlJjEbbiIGjiIfm","d45OmomPpIEEJJHKlfbJIjLjJBm","d6nMlkklKlDDHIijibdHiijihdf","E7MIlLMmlKGEIIInNeEHKLjJJCE","h8NnkkkLOIabfIjnNgDligIgJCa","h9lLOJnLOQDDILmkkdcMjHijKDb","EjjLKLnLLibFiGghkcDjlIKKidf","dKLKomKOnsbEhJhlOHfjiIiiHaB","EjloMOKOmOCFhIIJMBCLIJJJHEf","bjkmnnkLLKCCefiJLccHHijIHak","ChoPnnjmmiHGhhiiJDFLKkJjlan","EjmTNNQomfCFgMkhnCDKKklJKdn","ClyhrpllpklBllIjnCDfIrkIhll"]);
block(15,730,1572,[1716,1733,1780,1827,1870],["skpdomIotcDnRtkILnm","tsqqvsvy$%%zYw$Ywkn","egjfjprw()*+,-3dfdc","ac//ba//bbb:;acadac"]);
block(34,1620,2459,[1096,1118,1165,1213,1260,1307,1355,1402,1449,1496,1544,1591,1638,1686,1733,1780,1827,1875],[
"icCfffFffcfcfafffb","mg<akmallddaaaaaaa","l=>aejhiMHdimaabcd","cb<aihjgklimkfllmd","baaajIbJcadadaaaad","gaaaaaaaaaaaaaaaad","faaafjmmaNMaanjaad","m??//@?aaaaaaaaaad","ib[]{}/aaaaaaaaldb","hfdgg/ceeggfdcgddb","mbabbjagbbbabaaaac","ma^afhfkmfmhhaaaac","ca~bEIhmmfjklmgjad","faaailaambfaaebaab","baaakbaaaaaaaaaaad","gaaaalmgklcdlhNcad","f/aaaaagaaaaaEaaad"]);
document.getElementById('mosaic').innerHTML=out;
</script>
</body>
</html>
